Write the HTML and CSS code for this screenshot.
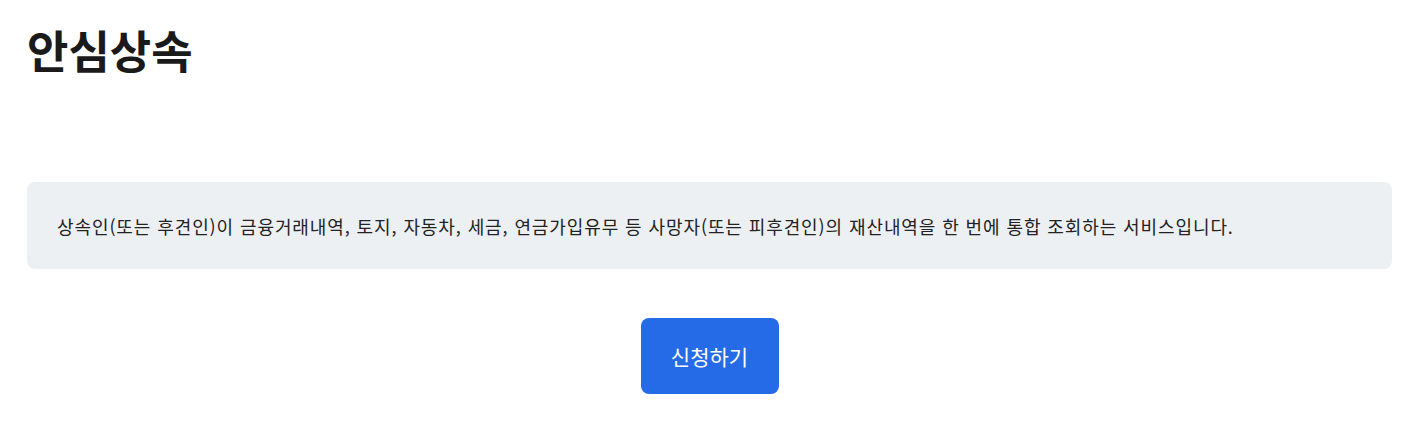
FILE: index.html
```html
<!DOCTYPE html>
<html lang="ko">
<head>
    <meta charset="UTF-8">
    <meta name="viewport" content="width=device-width, initial-scale=1.0">
    <title>안심상속</title>
    <link rel="stylesheet" href="styles.css">
</head>
<body>
    <div class="page">
        <h1 class="title">안심상속</h1>
        <div class="info">
            <p>상속인(또는 후견인)이 금융거래내역, 토지, 자동차, 세금, 연금가입유무 등 사망자(또는 피후견인)의 재산내역을 한 번에 통합 조회하는 서비스입니다.</p>
        </div>
        <div class="actions">
            <button type="button" class="apply">신청하기</button>
        </div>
    </div>
</body>
</html>
```

FILE: styles.css
```css
body {
    font-family: "Noto Sans CJK KR", "Noto Sans", sans-serif;
    margin: 0;
    padding: 0;
    background: #ffffff;
    color: #222;
}
.page {
    padding: 22px 22px 0 27px;
}
.title {
    margin: 0;
    font-size: 45px;
    font-weight: 700;
    line-height: 56px;
    color: #1a1a1a;
}
.info {
    margin-top: 104px;
    background: #edf0f3;
    border-radius: 8px;
    padding: 0 30px;
    height: 87px;
    display: flex;
    align-items: center;
}
.info p {
    margin: 0;
    font-size: 18px;
    letter-spacing: 0.9px;
    color: #222;
}
.actions {
    display: flex;
    justify-content: center;
    margin-top: 49px;
}
.apply {
    width: 138px;
    height: 76px;
    border: none;
    border-radius: 8px;
    background: #256be8;
    color: #fff;
    font-family: inherit;
    font-size: 21px;
    cursor: pointer;
}
```
